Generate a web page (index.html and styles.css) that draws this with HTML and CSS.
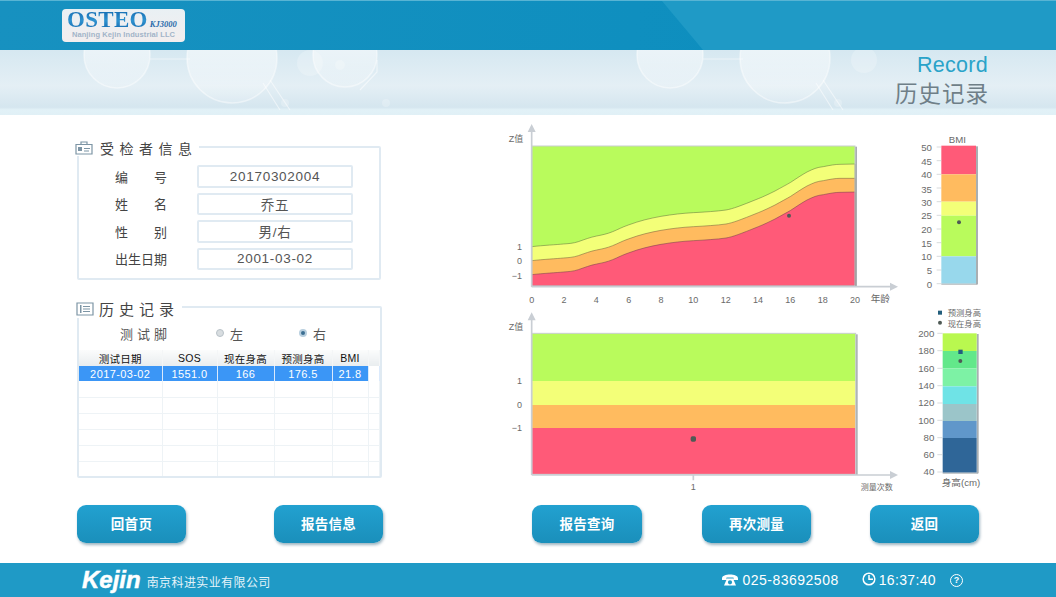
FILE: index.html
```html
<!DOCTYPE html>
<html lang="zh">
<head>
<meta charset="utf-8">
<title>历史记录</title>
<link rel="stylesheet" href="styles.css">
</head>
<body>
<div class="page">
  <header class="topbar">
    <div class="logo">
      <div class="logo-main"><span class="osteo">OSTEO</span><span class="model">KJ3000</span></div>
      <div class="logo-sub">Nanjing Kejin Industrial LLC</div>
    </div>
  </header>
  <section class="banner">
    <svg class="banner-art" viewBox="0 0 1056 65" aria-hidden="true">
      <defs>
        <linearGradient id="bub" x1="0" y1="0" x2="0" y2="1">
          <stop offset="0" stop-color="#fff" stop-opacity=".8"/>
          <stop offset="1" stop-color="#fff" stop-opacity=".12"/>
        </linearGradient>
      </defs>
      <g class="bubble" fill="url(#bub)">
        <circle cx="117" cy="5" r="33"/><circle cx="232" cy="8" r="45"/><circle cx="345" cy="5" r="32"/>
        <circle cx="670" cy="5" r="33"/><circle cx="785" cy="8" r="45"/>
      </g>
      <g class="wire">
        <path d="M150 9H190M263 33L280 60M270 30L290 60M377 10V22L360 40"/>
        <path d="M703 9H743M816 33L833 60M823 30L843 60"/>
      </g>
      <circle class="glow" cx="310" cy="13" r="13"/><circle class="glow" cx="864" cy="10" r="13"/>
      <circle class="glow" cx="340" cy="15" r="5"/>
      <circle class="glow" cx="386" cy="53" r="4"/><circle class="glow" cx="285" cy="53" r="4"/>
      <circle class="glow" cx="838" cy="53" r="4"/>
    </svg>
    <div class="banner-title">
      <div class="title-en">Record</div>
      <div class="title-cn">历史记录</div>
    </div>
  </section>

  <main class="content">
    <div class="left-col">
      <section class="panel panel-info">
        <h2 class="panel-title title-info">
          <svg class="title-icon" viewBox="0 0 18 14" aria-hidden="true"><path class="ico-line" d="M1 3.500H17V13H1ZM6 3.500V1H12V3.500"/><path class="ico-fill" d="M3 6H7V10H3ZM9 7H15V8H9ZM9 9.500H14V10.500H9Z"/></svg>
          <span>受检者信息</span>
        </h2>
        <div class="fields">
          <div class="field-row"><span class="field-label spread"><i>编</i><i>号</i></span><span class="field-value">20170302004</span></div>
          <div class="field-row"><span class="field-label spread"><i>姓</i><i>名</i></span><span class="field-value">乔五</span></div>
          <div class="field-row"><span class="field-label spread"><i>性</i><i>别</i></span><span class="field-value">男/右</span></div>
          <div class="field-row"><span class="field-label">出生日期</span><span class="field-value">2001-03-02</span></div>
        </div>
      </section>

      <section class="panel panel-history">
        <h2 class="panel-title title-history">
          <svg class="title-icon" viewBox="0 0 18 14" aria-hidden="true"><path class="ico-line" d="M1 1H17V13H1Z"/><path class="ico-fill" d="M4 3H5.500V11H4ZM7 4H14V5H7ZM7 6.500H14V7.500H7ZM7 9H14V10H7Z"/></svg>
          <span>历史记录</span>
        </h2>
        <div class="foot-row">
          <span class="foot-label">测试脚</span>
          <span class="radio radio-left"><b class="dot"></b>左</span>
          <span class="radio radio-right"><b class="dot dot-on"></b>右</span>
        </div>
        <table class="records">
          <colgroup><col class="c1"><col class="c2"><col class="c3"><col class="c4"><col class="c5"><col></colgroup>
          <thead><tr><th>测试日期</th><th>SOS</th><th>现在身高</th><th>预测身高</th><th>BMI</th><th></th></tr></thead>
          <tbody>
            <tr class="selected"><td>2017-03-02</td><td>1551.0</td><td>166</td><td>176.5</td><td>21.8</td><td class="rest"></td></tr>
            <tr><td></td><td></td><td></td><td></td><td></td><td></td></tr>
            <tr><td></td><td></td><td></td><td></td><td></td><td></td></tr>
            <tr><td></td><td></td><td></td><td></td><td></td><td></td></tr>
            <tr><td></td><td></td><td></td><td></td><td></td><td></td></tr>
            <tr><td></td><td></td><td></td><td></td><td></td><td></td></tr>
            <tr><td></td><td></td><td></td><td></td><td></td><td></td></tr>
          </tbody>
        </table>
      </section>
    </div>

    <div class="charts">
      <svg class="chart chart-a" viewBox="0 0 1200 555">
        <rect class="shade" x="1065" y="80" width="6" height="420"/>
        <rect class="c-green" x="95" y="78" width="970" height="420"/>
        <path class="c-yellow" d="M95 380C130 376 170 374 190 372C205 371 220 370 235 365C255 358 270 352 290 348C310 344 320 342 338 335C355 328 365 322 385 315C420 302 450 295 483 289C520 283 545 280 580 278C615 276 650 274 678 270C700 266 720 258 775 236C790 230 805 223 825 213C845 202 860 194 872 187C890 175 905 165 921 156C940 147 950 142 970 140C990 136 1005 133 1020 133L1065 132V498H95Z"/>
        <path class="c-orange" d="M95 422C130 418 170 416 190 414C205 413 220 412 235 407C255 400 270 394 290 390C310 386 320 384 338 377C355 370 365 364 385 357C420 344 450 337 483 331C520 325 545 322 580 320C615 318 650 316 678 312C700 308 720 300 775 278C790 272 805 265 825 255C845 244 860 236 872 229C890 217 905 207 921 198C940 189 950 184 970 182C990 178 1005 175 1020 175L1065 175V498H95Z"/>
        <path class="c-red" d="M95 464C130 460 170 458 190 456C205 455 220 454 235 449C255 442 270 436 290 432C310 428 320 426 338 419C355 412 365 406 385 399C420 386 450 379 483 373C520 367 545 364 580 362C615 360 650 358 678 354C700 350 720 342 775 320C790 314 805 307 825 297C845 286 860 278 872 271C890 259 905 249 921 240C940 231 950 226 970 224C990 220 1005 217 1020 217L1065 216V498H95Z"/>
        <rect class="frame" x="95" y="78" width="970" height="420"/>
        <path class="axis" d="M95 500V25M95 500H1180"/>
        <path class="arrow" d="M95 12L83 36H107ZM1194 500L1170 488V512Z"/>
        <circle class="pt" cx="867" cy="287" r="6"/>
        <text class="lbl mid" x="48" y="67">Z值</text>
        <text class="lbl end" x="66" y="391">1</text><text class="lbl end" x="66" y="433">0</text><text class="lbl end" x="66" y="476">−1</text>
        <g class="lbl mid"><text x="95" y="549">0</text><text x="192" y="549">2</text><text x="289" y="549">4</text><text x="386" y="549">6</text><text x="483" y="549">8</text><text x="580" y="549">10</text><text x="677" y="549">12</text><text x="774" y="549">14</text><text x="871" y="549">16</text><text x="968" y="549">18</text><text x="1065" y="549">20</text></g>
        <text class="lbl mid lbl-big" x="1141" y="547">年龄</text>
      </svg>

      <svg class="mini mini-a" viewBox="0 -15 300 555">
        <rect class="shade" x="228" y="64" width="6" height="414"/>
        <rect class="c-red" x="124" y="62" width="104" height="86"/>
        <rect class="c-orange" x="124" y="148" width="104" height="82"/>
        <rect class="c-yellow" x="124" y="230" width="104" height="42"/>
        <rect class="c-green" x="124" y="272" width="104" height="122"/>
        <rect class="c-sky" x="124" y="394" width="104" height="82"/>
        <rect class="shade" x="124" y="476" width="108" height="3"/>
        <path class="tick" d="M110 66H124M110 107H124M110 148H124M110 189H124M110 230H124M110 271H124M110 312H124M110 353H124M110 394H124M110 435H124M110 476H124"/>
        <circle class="pt" cx="177" cy="292" r="6"/>
        <text class="lbl mid" x="172" y="53">BMI</text>
        <g class="lbl end"><text x="96" y="78">50</text><text x="96" y="119">45</text><text x="96" y="160">40</text><text x="96" y="204">35</text><text x="96" y="242">30</text><text x="96" y="283">25</text><text x="96" y="324">20</text><text x="96" y="365">15</text><text x="96" y="406">10</text><text x="96" y="447">5</text><text x="96" y="488">0</text></g>
      </svg>

      <svg class="chart chart-b" viewBox="0 0 1200 570">
        <rect class="shade" x="1067" y="88" width="6" height="422"/>
        <rect class="c-green" x="95" y="85" width="972" height="143"/>
        <rect class="c-yellow" x="95" y="228" width="972" height="72"/>
        <rect class="c-orange" x="95" y="300" width="972" height="69"/>
        <rect class="c-red" x="95" y="369" width="972" height="139"/>
        <rect class="frame" x="95" y="85" width="972" height="423"/>
        <path class="axis" d="M95 510V35M95 510H1180M580 510V526"/>
        <path class="arrow" d="M95 22L83 46H107ZM1194 510L1170 498V522Z"/>
        <rect class="pt" x="572" y="394" width="16" height="16" rx="5"/>
        <text class="lbl mid" x="48" y="75">Z值</text>
        <text class="lbl end" x="66" y="237">1</text><text class="lbl end" x="66" y="309">0</text><text class="lbl end" x="66" y="379">−1</text>
        <text class="lbl mid" x="580" y="554">1</text>
        <text class="lbl mid lbl-small" x="1130" y="554">测量次数</text>
      </svg>

      <svg class="mini mini-b" viewBox="0 15 300 570">
        <rect class="shade" x="230" y="102" width="6" height="418"/>
        <rect class="s1" x="128" y="100" width="102" height="53"/>
        <rect class="s2" x="128" y="153" width="102" height="52"/>
        <rect class="s3" x="128" y="205" width="102" height="54"/>
        <rect class="s4" x="128" y="259" width="102" height="53"/>
        <rect class="s5" x="128" y="312" width="102" height="51"/>
        <rect class="s6" x="128" y="363" width="102" height="51"/>
        <rect class="s7" x="128" y="414" width="102" height="104"/>
        <rect class="shade" x="128" y="518" width="106" height="3"/>
        <path class="tick" d="M112 100H128M112 152H128M112 205H128M112 257H128M112 309H128M112 361H128M112 413H128M112 464H128M112 516H128"/>
        <rect class="pt-sq" x="114" y="32" width="12" height="12"/>
        <circle class="pt" cx="120" cy="68" r="6"/>
        <rect class="pt-sq" x="175" y="149" width="13" height="13"/>
        <circle class="pt" cx="181" cy="183" r="6"/>
        <text class="lbl start" x="143" y="49">预测身高</text>
        <text class="lbl start" x="143" y="80">现在身高</text>
        <g class="lbl end"><text x="103" y="110">200</text><text x="103" y="162">180</text><text x="103" y="215">160</text><text x="103" y="267">140</text><text x="103" y="319">120</text><text x="103" y="371">100</text><text x="103" y="423">80</text><text x="103" y="473">60</text><text x="103" y="525">40</text></g>
        <text class="lbl mid" x="183" y="559">身高(cm)</text>
      </svg>
    </div>
  </main>

  <nav class="actions">
    <div class="btn-group group-left">
      <button class="btn">回首页</button>
      <button class="btn">报告信息</button>
    </div>
    <div class="btn-group group-right">
      <button class="btn btn-wide">报告查询</button>
      <button class="btn">再次测量</button>
      <button class="btn">返回</button>
    </div>
  </nav>

  <footer class="footer">
    <div class="brand"><span class="brand-name">Kejin</span><span class="brand-cn">南京科进实业有限公司</span></div>
    <div class="status">
      <span class="stat stat-phone">
        <svg class="ico-phone" viewBox="0 0 16 12" aria-hidden="true"><path d="M0 4.500C0 1.500 4 0.500 8 0.500S16 1.500 16 4.500V6H11.500V3.500H4.500V6H0ZM5 4.500H11L14 11.500H2ZM8 6.200A2.100 2.100 0 1 0 8 10.400A2.100 2.100 0 1 0 8 6.200Z" fill-rule="evenodd"/></svg>
        025-83692508
      </span>
      <span class="stat stat-time">
        <svg class="ico-clock" viewBox="0 0 14 14" aria-hidden="true"><circle cx="7" cy="7" r="5.800"/><path d="M7 3V7.300H11"/></svg>
        16:37:40
      </span>
      <span class="help">?</span>
    </div>
  </footer>
</div>
</body>
</html>
```

FILE: styles.css
```css
* { box-sizing: border-box; }
html, body { margin: 0; padding: 0; background: #fff; }
body { font-family: "Liberation Sans", "Noto Sans CJK SC", sans-serif; color: #555; }
.page { width: 1056px; height: 597px; overflow: hidden; display: flex; flex-direction: column; }

/* top bar */
.topbar { position: relative; height: 50px; padding: 8px 0 0 62px; background: linear-gradient(100deg, #1791c0 0%, #0f8fbf 60%, #0a8cbc 100%); border-top: 1px solid #58b4d4; }
.topbar::after { content: ""; position: absolute; inset: 0; background: #1f9ac6; clip-path: polygon(662px 0, 100% 0, 100% 100%, 703px 100%); }
.logo { position: relative; z-index: 1; width: 123px; height: 33px; padding-left: 5px; border-radius: 4px; background: linear-gradient(180deg, #e9f0f4, #f3eeee); }
.logo-main { height: 21px; line-height: 22px; white-space: nowrap; }
.osteo { font-family: "Liberation Serif", serif; font-weight: 700; font-size: 23px; letter-spacing: .3px; background: linear-gradient(180deg, #0b5fa8, #2f93d0 55%, #0c5ea5); -webkit-background-clip: text; background-clip: text; color: transparent; }
.model { margin-left: 2px; font-family: "Liberation Serif", serif; font-style: italic; font-weight: 700; font-size: 8.500px; color: #2a6cab; }
.logo-sub { font-size: 7.500px; line-height: 10px; font-weight: 700; color: #a2b4c8; letter-spacing: .1px; text-align: center; margin-left: -5px; }

/* banner */
.banner { position: relative; height: 65px; background: linear-gradient(180deg, #d6e8f1 0%, #e4eff5 55%, #d5e6ef 88%, #e2f1f7 92%, #e0f0f6 100%); display: flex; justify-content: flex-end; }
.banner-art { position: absolute; inset: 0; width: 1056px; height: 65px; }
.bubble circle { stroke: rgba(255,255,255,.45); stroke-width: 1.500; }
.wire path { fill: none; stroke: rgba(255,255,255,.5); stroke-width: 1.200; }
.glow { fill: rgba(255,255,255,.22); }
.banner-title { position: relative; padding: 3px 68px 0 0; text-align: right; }
.title-en { font-size: 21.500px; line-height: 24px; color: #2aa3c9; letter-spacing: .3px; }
.title-cn { margin-top: 5px; font-size: 22.500px; line-height: 26px; letter-spacing: 1px; color: #6f7f88; margin-right: -1px; }

/* main */
.content { display: flex; height: 380px; padding-left: 75px; }
.left-col { width: 425px; padding: 31px 0 0 2px; }
.panel { border: 2px solid #e0eaf2; border-radius: 2px; }
.panel-title { display: flex; align-items: center; width: fit-content; margin: 0; background: #fff; font-weight: 400; color: #444; }
.title-icon { width: 18px; height: 14px; flex: none; }
.ico-line { fill: none; stroke: #7d95a5; stroke-width: 1.200; }
.ico-fill { fill: #7d95a5; }

.panel-info { width: 304px; height: 134px; }
.title-info { margin: -9px 0 0 -4px; height: 17px; padding-right: 1px; font-size: 14px; letter-spacing: 5.500px; }
.title-info span { margin-left: 7px; }
.fields { display: flex; flex-direction: column; gap: 5px; padding: 9px 0 0 36px; }
.field-row { display: flex; align-items: center; height: 22.500px; }
.field-label { width: 52px; font-size: 13px; letter-spacing: 0; color: #444; display: flex; }
.spread { justify-content: space-between; }
.spread i { font-style: normal; }
.field-value { margin-left: 30px; width: 156px; height: 100%; border: 2px solid #e0eaf2; border-radius: 2px; display: flex; align-items: center; justify-content: center; font-size: 13.500px; letter-spacing: .7px; color: #555; }

.panel-history { width: 305px; height: 172px; margin-top: 26px; }
.title-history { margin: -9px 0 0 -3px; height: 19px; padding-right: 3px; font-size: 15px; letter-spacing: 5px; }
.title-history span { margin-left: 5px; }
.foot-row { display: flex; align-items: center; height: 32px; padding: 0 0 2px 41px; font-size: 13px; color: #555; }
.foot-label { letter-spacing: 4px; width: 96px; }
.radio { display: flex; align-items: center; gap: 6px; }
.radio-left { width: 83px; }
.dot { width: 8px; height: 8px; border-radius: 50%; background: #d8dde0; border: 1px solid #b9c2c8; }
.dot-on { background: #3c6f92; border: 2px solid #b8cfdf; }

.records { border-collapse: collapse; table-layout: fixed; width: 301px; font-size: 11px; }
.c1 { width: 83px; } .c2 { width: 55px; } .c3 { width: 57px; } .c4 { width: 58px; } .c5 { width: 36px; }
.records th { height: 16px; padding: 0; font-weight: 400; color: #111; background: linear-gradient(180deg, #fbfcfc, #e9edef); border-right: 1px solid #f4f6f7; font-size: 10.500px; letter-spacing: .2px; }
.records td { height: 16px; padding: 0; text-align: center; border-right: 1px solid #eef3f6; border-bottom: 1px solid #eef3f6; }
.records tr:last-child td { height: 15px; border-bottom: 0; }
.records .selected td { height: 15px; background: #3b96f6; color: #fff; border-right: 1px solid #dbeafc; border-bottom: 0; font-size: 11px; letter-spacing: .4px; }
.records .selected .rest { background: #fff; }

/* charts */
.charts { display: grid; grid-template-columns: 400px 100px; grid-template-rows: 185px 190px; padding-top: 5px; }
.chart, .mini { display: block; }
.chart { width: 400px; }
.chart-a { height: 185px; }
.chart-b { height: 190px; }
.mini { width: 100px; }
.mini-a { height: 185px; }
.mini-b { height: 190px; }
.c-green { fill: #b9fb5c; }
.c-yellow { fill: #f3ff78; stroke: #5a6a3a; stroke-width: 1.500; }
.c-orange { fill: #ffbb5f; stroke: #6a5a3a; stroke-width: 1.500; }
.c-red { fill: #ff5a78; stroke: #6a3a4a; stroke-width: 1.500; }
.chart-b rect.c-yellow, .chart-b rect.c-orange, .chart-b rect.c-red,
.mini rect.c-yellow, .mini rect.c-orange, .mini rect.c-red { stroke: none; }
.c-sky { fill: #98d8ec; }
.s1 { fill: #b9f84f; } .s2 { fill: #62e88a; } .s3 { fill: #7df2a5; } .s4 { fill: #6fe3e6; } .s5 { fill: #9bc5c9; } .s6 { fill: #6097ca; } .s7 { fill: #2f6698; }
.frame { fill: none; stroke: #c9ced0; stroke-width: 3; }
.shade { fill: #a9afb2; }
.axis { fill: none; stroke: #c9ced4; stroke-width: 5; }
.arrow { fill: #c9ced4; }
.tick { fill: none; stroke: #c4c8cb; stroke-width: 2; }
.pt { fill: #4f5a55; }
.pt-sq { fill: #235e7c; }
.lbl { font-family: "Liberation Sans", "Noto Sans CJK SC", sans-serif; fill: #6a6a6a; }
.chart .lbl { font-size: 27px; }
.chart .lbl-small { font-size: 24px; }
.mini .lbl { font-size: 29px; }
.mini .lbl.start { font-size: 25px; }
.chart .lbl-big { font-size: 29px; }
.mid { text-anchor: middle; }
.end { text-anchor: end; }
.start { text-anchor: start; }

/* buttons */
.actions { display: flex; height: 38px; margin-top: 10px; padding-left: 77px; }
.btn-group { display: flex; }
.group-left { gap: 88px; }
.group-right { gap: 60px; margin-left: 149px; }
.group-right .btn:last-child { margin-left: -1px; }
.btn { width: 109px; height: 38px; padding: 0 0 2px; border: 0; border-radius: 9px; background: linear-gradient(180deg, #22a1d0, #1a8fbb); box-shadow: 1px 2px 3px rgba(10,70,100,.4); color: #fff; font-family: inherit; font-size: 13.500px; font-weight: 700; letter-spacing: .3px; }
.btn-wide { width: 110px; }

/* footer */
.footer { display: flex; justify-content: space-between; align-items: center; height: 34px; margin-top: 20px; padding: 0 93px 0 82px; background: #1f9ac6; color: #fff; }
.brand { display: flex; align-items: center; }
.brand-name { font-size: 24px; font-weight: 700; font-style: italic; -webkit-text-stroke: .5px #fff; }
.brand-cn { margin-left: 6px; font-size: 12px; letter-spacing: .4px; padding-top: 3px; color: #e4f3f9; }
.status { display: flex; align-items: center; }
.stat { display: flex; align-items: center; font-size: 14px; letter-spacing: .35px; }
.stat-phone { gap: 4px; letter-spacing: .5px; }
.stat-time { margin-left: 23px; gap: 3px; }
.ico-phone { width: 16px; height: 12px; fill: #fff; }
.ico-clock { width: 14px; height: 14px; fill: none; stroke: #fff; stroke-width: 1.500; margin-top: -2px; }
.help { width: 13px; height: 13px; margin-left: 14px; border: 1.500px solid #fff; border-radius: 50%; display: flex; align-items: center; justify-content: center; font-size: 9px; font-weight: 700; }
```
